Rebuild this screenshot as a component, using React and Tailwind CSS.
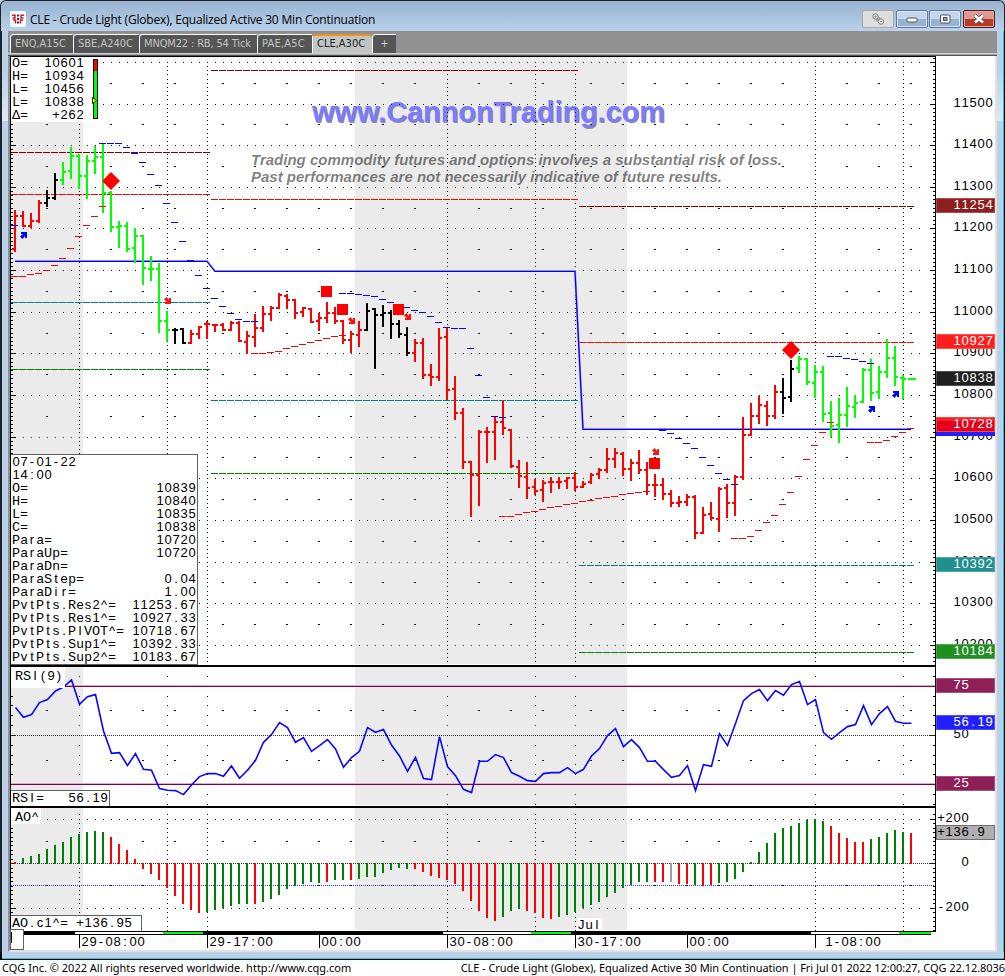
const FONT = "Liberation Sans, Arial, sans-serif";
const CAPS_FONT = "Liberation Mono, monospace";
const barX = (i) => 15 + i * 8;

// [high, low, open, close] in chart pixels, one row per 30 minute bar
const BARS = [
  [210, 252, 249, 216], [211, 227, 216, 226], [213, 228, 226, 221], [200, 223, 221, 203],
  [190, 207, 203, 198], [173, 200, 198, 180], [162, 185, 180, 172], [147, 179, 171, 156],
  [154, 189, 156, 176], [155, 199, 176, 161], [146, 174, 161, 157], [143, 213, 157, 193],
  [191, 232, 193, 227], [221, 248, 227, 226], [222, 252, 226, 249], [228, 263, 248, 236],
  [235, 285, 236, 268], [256, 281, 269, 269], [263, 333, 269, 321], [311, 341, 321, 330],
  [328, 344, 330, 330], [328, 344, 329, 343], [330, 344, 343, 334], [326, 339, 334, 327],
  [321, 339, 324, 324], [324, 332, 325, 325], [323, 331, 325, 330], [321, 331, 330, 323],
  [321, 342, 323, 341], [331, 354, 342, 336], [314, 347, 337, 328], [306, 332, 328, 314],
  [306, 321, 314, 308], [293, 309, 308, 295], [294, 309, 296, 300], [299, 319, 300, 313],
  [307, 317, 312, 308], [308, 323, 309, 322], [313, 331, 321, 318], [302, 323, 318, 313],
  [307, 324, 313, 321], [320, 344, 321, 340], [331, 353, 340, 334], [321, 347, 335, 330],
  [303, 331, 330, 311], [308, 369, 309, 315], [305, 327, 315, 313], [310, 339, 313, 324],
  [320, 338, 324, 334], [327, 356, 335, 353], [339, 362, 353, 343], [338, 379, 343, 375],
  [364, 386, 375, 377], [328, 381, 377, 338], [327, 400, 337, 390], [376, 420, 389, 413],
  [408, 469, 413, 462], [461, 517, 462, 475], [430, 506, 475, 432], [427, 463, 432, 432],
  [417, 460, 432, 422], [401, 435, 422, 428], [429, 468, 430, 466], [460, 488, 467, 476],
  [462, 499, 477, 488], [479, 495, 487, 491], [480, 502, 490, 483], [477, 493, 482, 482],
  [477, 489, 482, 482], [477, 489, 481, 478], [472, 491, 478, 487], [481, 488, 487, 484],
  [473, 484, 482, 475], [468, 479, 474, 470], [448, 473, 470, 459], [448, 468, 459, 453],
  [452, 476, 454, 469], [459, 481, 469, 463], [450, 474, 463, 470], [462, 495, 470, 485],
  [474, 497, 485, 485], [478, 500, 485, 494], [490, 507, 494, 503], [496, 507, 503, 502],
  [494, 506, 502, 497], [495, 539, 497, 533], [507, 534, 533, 515], [502, 520, 514, 518],
  [487, 532, 519, 489], [484, 518, 488, 503], [475, 516, 503, 477], [417, 480, 477, 435],
  [403, 436, 435, 416], [396, 424, 416, 405], [401, 426, 406, 416], [385, 419, 416, 392],
  [378, 414, 392, 398], [360, 402, 397, 369], [356, 373, 368, 359], [358, 385, 359, 382],
  [365, 398, 383, 372], [366, 422, 372, 414], [401, 437, 413, 426], [398, 443, 425, 415],
  [387, 427, 415, 406], [395, 418, 407, 403], [368, 403, 402, 370], [359, 401, 370, 393],
  [366, 399, 392, 372], [339, 378, 372, 358], [346, 386, 358, 377], [375, 399, 378, 379],
  [378, 380, 379, 379],
];

const barColor = (i) => {
  if ((i >= 6 && i <= 19) || i >= 98) return "#00ff00";
  if (i === 4 || i === 5 || i === 20 || i === 21 || (i >= 44 && i <= 49) || i === 96 || i === 97) return "#000";
  return "#ff0000";
};

// parabolic runs: colour, first bar, one level per bar
const PARA = [
  ["#0000ff", 0, [225]],
  ["#0000ff", 11, [143, 143, 143, 147, 153, 162, 174, 185, 203, 222, 241, 260, 275, 288, 298, 306, 313, 319, 321, 321]],
  ["#0000ff", 41, [293, 293, 294, 295, 296, 299, 302, 305, 307, 310, 312, 316, 322, 327, 328, 328, 348, 375, 397, 416, 417]],
  ["#0000ff", 81, [430, 433, 438, 443, 448, 457, 465, 473, 479, 484]],
  ["#0000ff", 102, [356, 356, 358, 359, 361, 363]],
  ["#ff0000", 0, [276, 276, 274, 273, 270, 265, 258, 248, 236, 225, 216, 206]],
  ["#ff0000", 30, [353, 353, 352, 351, 348, 346, 344, 342, 340, 338, 336, 335]],
  ["#ff0000", 61, [516, 516, 514, 512, 511, 509, 507, 506, 504, 503, 501, 500, 498, 497, 496, 494, 493, 492, 491]],
  ["#ff0000", 90, [538, 538, 536, 530, 522, 515, 504, 492, 476, 459, 445, 432, 422]],
  ["#ff0000", 107, [442, 442, 440, 436, 432, 428]],
];

// pivot levels: from, to, y, colour
const PIVOTS = [
  [11, 210, 152, "#800000"], [11, 210, 194, "#ff0000"], [11, 210, 302, "#008080"], [11, 210, 369, "#008000"],
  [211, 578, 70, "#800000"], [211, 578, 199, "#ff0000"], [211, 578, 400, "#008080"], [211, 578, 473, "#008000"],
  [579, 914, 206, "#800000"], [579, 914, 342, "#ff0000"], [579, 914, 565, "#008080"], [579, 914, 652, "#008000"],
];

const RSI = [
  707.3, 717, 714.3, 702.3, 699.3, 690.7, 686.7, 679.7, 704, 696.3, 694.3, 730.7, 753, 752.3, 765.3, 753.3,
  769, 770, 788.3, 790, 790.3, 794.3, 784.7, 776.3, 773.3, 773.3, 776, 765.7, 778, 770, 760, 742, 734.3, 722.3,
  727.3, 742, 737.3, 751, 745.3, 739.3, 748.7, 767, 757.3, 751, 727.3, 732, 729.3, 744.7, 755.7, 771, 757,
  778.3, 779.3, 736.3, 766.3, 775.3, 789, 792.3, 761, 761, 754.3, 757.3, 772.3, 776, 780.3, 781, 773.3, 772.3,
  772.3, 767.3, 773.3, 769, 755.7, 748.3, 735.3, 728.3, 746.3, 739.3, 747.3, 761, 761, 769.3, 777, 775.3,
  765.3, 790.3, 764.3, 766, 733.3, 745.3, 723.3, 700.3, 693.3, 689.3, 700.3, 690.3, 695, 684.3, 681.3, 704.3,
  699.3, 732.3, 739, 732.3, 726.3, 724.3, 705.3, 724.3, 713.3, 706.3, 721, 723, 723,
];

const AO = [
  862, 858, 856, 854, 849, 845, 842, 837, 834, 832, 831, 832, 837, 844, 850, 859, 869, 874, 880, 888, 896, 904,
  910, 913, 912, 910, 908, 906, 904, 904, 904, 902, 899, 895, 889, 886, 884, 882, 883, 882, 880, 880, 880, 879,
  877, 877, 873, 870, 868, 869, 869, 872, 876, 878, 880, 884, 891, 901, 911, 918, 921, 917, 911, 909, 911, 913,
  918, 919, 917, 915, 912, 908, 905, 902, 897, 893, 888, 885, 882, 882, 882, 882, 882, 884, 884, 885, 886, 885,
  883, 882, 879, 872, 862, 852, 843, 833, 828, 826, 823, 820, 819, 821, 826, 833, 838, 842, 842, 839, 837, 833,
  830, 832, 833,
];
const AO_RED = [
  [0, 0], [12, 23], [30, 30], [39, 39], [42, 42], [50, 60], [64, 67], [80, 81], [83, 84], [86, 87], [102, 106], [112, 112],
];
const aoColor = (i) => {
  if (i === 82) return "#a0a0a0";
  return AO_RED.some(([a, b]) => i >= a && i <= b) ? "#ff0000" : "#008000";
};

const SESSIONS = [79, 167, 207, 447, 535, 575, 815, 903];
const MARKS = [
  47, 111, 143, 175, 223, 255, 287, 319, 351, 383, 415, 479, 511, 543, 591, 623, 655, 687, 719, 751, 783, 847, 879, 911,
];
const range = (n) => Array.from({ length: n }, (_, i) => i);
const priceY = (p) => Math.floor(62.45 + (11600 - p) * 0.4163);

// fixed pitch text, every character centred in an 8px cell;
// wide capitals come from the mono face so they stay inside their cell
function Cells({ x, y, fill = "#000", children }) {
  const chars = [...children];
  return (
    <text
      x={chars.map((_, i) => x + 4 + i * 8).join(" ")}
      y={y}
      fill={fill}
      fontSize="13"
      fontFamily={FONT}
      textAnchor="middle"
      style={{ whiteSpace: "pre" }}
    >
      {children.split(/([A-HJ-Z]+)/).filter(Boolean).map((run, i) =>
        /^[A-HJ-Z]/.test(run) ? <tspan key={i} fontFamily={CAPS_FONT} fontSize="13.5">{run}</tspan> : run
      )}
    </text>
  );
}

function Badge({ y, color, border, text, x = 953, fill = "#fff" }) {
  return (
    <g>
      <rect x="936.5" y={y + 0.5} width="58" height="14" fill={color} stroke={border} />
      {text && <Cells x={x} y={y + 11} fill={fill}>{text}</Cells>}
    </g>
  );
}

function Shade({ y, height }) {
  return (
    <g fill="#ebebeb">
      <rect x="11" y={y} width="72" height={height} />
      <rect x="355" y={y} width="272" height={height} />
    </g>
  );
}

function DotRow({ y }) {
  return <path d={`M15 ${y + 0.5}H927`} stroke="#000" strokeDasharray="1 7" />;
}

function MarkRow({ y }) {
  return <path d={MARKS.map((x) => `M${x - 1} ${y + 0.5}h2`).join("")} stroke="#000" />;
}

function Columns({ rows, from = 0 }) {
  return (
    <path
      d={SESSIONS.flatMap((x) => rows.filter((y) => y >= from).map((y) => `M${x} ${y + 0.5}h1`)).join("")}
      stroke="#000"
    />
  );
}

function Ticks({ rows, majors }) {
  return (
    <path
      d={
        rows.map((y) => `M11 ${y + 0.5}h2M933 ${y + 0.5}h2`).join("") +
        majors.map((y) => `M11 ${y + 0.5}h5M930 ${y + 0.5}h5`).join("")
      }
      stroke="#000"
    />
  );
}

function Frame({ y, height }) {
  return <path d={`M10.5 ${y}v${height}M935.5 ${y}v${height}`} stroke="#000" />;
}

function Arrow({ x, y, up }) {
  return (
    <path
      d={up ? "M1 0H7V6H5V4L2.5 7L0 4.5L3 2H1Z" : "M7 1V7H1V5H3L0 2.5L2.5 0L5 3V1Z"}
      transform={`translate(${x} ${y})`}
      fill={up ? "#0000ff" : "#ff1010"}
    />
  );
}

const HEADER_ROWS = ["O=  10601", "H=  10934", "L=  10456", "L=  10838", "Δ=   +262"];
const INFO_ROWS = [
  ["07-01-22", ""], ["14:00", ""], ["O=", "10839"], ["H=", "10840"], ["L=", "10835"], ["C=", "10838"],
  ["Para=", "10720"], ["ParaUp=", "10720"], ["ParaDn=", ""], ["ParaStep=", "0.04"], ["ParaDir=", "1.00"],
  ["PvtPts.Res2^=", "11253.67"], ["PvtPts.Res1^=", "10927.33"], ["PvtPts.PIVOT^=", "10718.67"],
  ["PvtPts.Sup1^=", "10392.33"], ["PvtPts.Sup2^=", "10183.67"],
];

function PricePane() {
  const rows = range(146).map((i) => priceY(11610 - i * 10));
  const majors = range(15).map((i) => priceY(11600 - i * 100));
  const pivot = "15,Y1 207,Y1 215,Y2 575,Y2 583,Y3 911,Y3";
  const pivotAt = (d) => pivot.replaceAll("Y1", 261.5 + d).replaceAll("Y2", 271.5 + d).replaceAll("Y3", 429.5 + d);
  return (
    <svg viewBox="10 56 985 609" className="block h-[609px] w-[985px] shrink-0">
      <Shade y={56} height={608} />
      <g fontFamily={FONT} fontWeight="bold">
        <text x="313" y="123" fontSize="29" textLength="353" fill="#909090">www.CannonTrading.com</text>
        <text x="312" y="122" fontSize="29" textLength="353" fill="#7b7bff">www.CannonTrading.com</text>
        <g fontSize="15" fontStyle="italic" fill="#000" fillOpacity="0.5">
          <text x="251" y="165" textLength="531">Trading commodity futures and options involves a substantial risk of loss.</text>
          <text x="251" y="182" textLength="471">Past performances are not necessarily indicative of future results.</text>
        </g>
      </g>
      <g shapeRendering="crispEdges">
        {majors.map((y) => <DotRow key={y} y={y} />)}
        {range(14).map((i) => <MarkRow key={i} y={priceY(11550 - i * 100)} />)}
        <Columns rows={rows} from={62} />
        <Ticks rows={rows} majors={majors} />
        {PIVOTS.map(([a, b, y, color]) => (
          <path key={`${a}-${y}`} d={`M${a} ${y + 0.5}H${b}`} stroke={color} strokeDasharray="7 1" />
        ))}
      </g>
      <polyline points={pivotAt(-0.5)} fill="none" stroke="#8c8cff" strokeWidth="2" />
      <polyline points={pivotAt(0)} fill="none" stroke="#0000ee" strokeWidth="1.2" />
      <g shapeRendering="crispEdges">
        {BARS.map(([h, l, o, c], i) => (
          <path
            key={i}
            d={`M${barX(i)} ${h}V${l}M${barX(i) - 3} ${o}h3M${barX(i)} ${c}h${i === 112 ? 5 : 3}`}
            stroke={barColor(i)}
            strokeWidth="2"
          />
        ))}
        {PARA.map(([color, start, levels]) => (
          <path
            key={color + start}
            d={levels.map((y, i) => `M${barX(start + i) - 4} ${y + 0.5}h7`).join("")}
            stroke={color}
          />
        ))}
      </g>
      <g fill="#ff0000">
        <path d="M111 172l9 9l-9 9l-9-9z" />
        <path d="M791 341l9 9l-9 9l-9-9z" />
        <rect x="321" y="286" width="11" height="11" />
        <rect x="337" y="304" width="11" height="11" />
        <rect x="393" y="304" width="11" height="11" />
        <rect x="649" y="458" width="11" height="11" />
      </g>
      <Arrow x={164} y={297} />
      <Arrow x={348} y={317} />
      <Arrow x={404} y={313} />
      <Arrow x={652} y={448} />
      <Arrow x={20} y={232} up />
      <Arrow x={868} y={406} up />
      <Arrow x={892} y={391} up />

      <rect x="11" y="57" width="91" height="65" fill="#fff" />
      {HEADER_ROWS.map((row, i) => <Cells key={i} x={12} y={67 + i * 13}>{row}</Cells>)}
      <rect x="93.5" y="59.5" width="4" height="59" fill="#00ff00" stroke="#000" />
      <rect x="94" y="60" width="3" height="11" fill="#ff0000" />
      <path d="M92.5 97.5L96.5 100.5L92.5 103.5Z" fill="#ffff00" stroke="#000" strokeWidth="0.8" />

      <rect x="10.5" y="454.5" width="187" height="210" fill="#fff" stroke="#606060" />
      {INFO_ROWS.map(([label, value], i) => (
        <Cells key={label} x={12} y={466 + i * 13}>{value ? label + value.padStart(23 - label.length) : label}</Cells>
      ))}
      <Frame y={56} height={609} />
      <path d="M10 56.5H936" stroke="#000" />

      {range(14).map((i) => 11500 - i * 100).map((p) => (
        <Cells key={p} x={953} y={priceY(p) + 3}>{String(p)}</Cells>
      ))}
      <Badge y={198} color="#8f1f1f" border="#a85050" text="11254" />
      <Badge y={334} color="#ff1f1f" border="#ff5050" text="10927" />
      <Badge y={371} color="#202020" border="#505050" text="10838" />
      <rect x="936" y="421" width="59" height="15" fill="#1f1fff" />
      <Badge y={417} color="#ff1f1f" border="#ff4040" />
      <rect x="937" y="421" width="57" height="10" fill="#e3001f" />
      <Cells x={953} y={428} fill="#fff">10728</Cells>
      <Badge y={557} color="#1f8f8f" border="#50a8a8" text="10392" />
      <Badge y={644} color="#1f8f1f" border="#50a850" text="10184" />
    </svg>
  );
}

function RsiPane() {
  const rows = range(14).map((i) => Math.floor(676.4 + i * 9.83));
  return (
    <svg viewBox="10 665 985 141" className="block h-[141px] w-[985px] shrink-0">
      <Shade y={667} height={138} />
      <g shapeRendering="crispEdges">
        <Columns rows={rows} />
        <Ticks rows={rows} majors={[735]} />
        <MarkRow y={710} />
        <MarkRow y={760} />
        <path d="M11 735.5H935" stroke="#303030" strokeDasharray="1 1" />
        <path d="M11 685.5H935M11 783.5H935" stroke="#d9b0c8" />
        <path d="M11 686.5H935M11 784.5H935" stroke="#800048" />
      </g>
      <polyline
        points={RSI.map((y, i) => `${barX(i) + 0.5},${y + 0.3}`).join(" ")}
        fill="none"
        stroke="#0808ff"
        strokeWidth="1.6"
      />
      <rect x="11" y="667" width="54" height="21" fill="#fff" />
      <Cells x={15} y={680}>RSI(9)</Cells>
      <rect x="10.5" y="790.5" width="99" height="16" fill="#fff" stroke="#606060" />
      <Cells x={12} y={802}>RSI=   56.19</Cells>
      <Frame y={665} height={141} />
      <path d="M10 666H936" stroke="#000" strokeWidth="2" />
      <Cells x={953} y={738}>50</Cells>
      <Badge y={678} color="#8f1f57" border="#a85080" text="75" />
      <Badge y={715} color="#1f1fff" border="#5050ff" text="56.19" />
      <Badge y={776} color="#8f1f57" border="#a85080" text="25" />
    </svg>
  );
}

function AoPane() {
  const rows = range(27).map((i) => Math.floor(814.8 + i * 4.45));
  return (
    <svg viewBox="10 806 985 125" className="block h-[125px] w-[985px] shrink-0">
      <Shade y={808} height={122} />
      <g shapeRendering="crispEdges">
        <Columns rows={rows} />
        <Ticks rows={rows} majors={[819, 863, 908]} />
        <DotRow y={819} />
        <DotRow y={908} />
        <MarkRow y={841} />
        <path d="M11 863.5H935" stroke="#303030" strokeDasharray="1 1" />
        <path d="M11 885.5H935" stroke="#3838ff" strokeDasharray="1 1" />
        <MarkRow y={885} />
        {AO.map((y, i) => (
          <path key={i} d={`M${barX(i)} ${y < 863 ? 864 : 863}V${y}`} stroke={aoColor(i)} strokeWidth="2" />
        ))}
      </g>
      <rect x="11" y="808" width="30" height="16" fill="#fff" />
      <Cells x={15} y={821}>AO^</Cells>
      <rect x="10.5" y="915.5" width="131" height="17" fill="#fff" stroke="#606060" />
      <Cells x={12} y={927}>AO.c1^= +136.95</Cells>
      <rect x="577" y="918" width="25" height="12" fill="#fff" />
      <Cells x={577} y={929}>Jul</Cells>
      <Frame y={806} height={125} />
      <path d="M10 807H936" stroke="#000" strokeWidth="2" />
      <Cells x={937} y={822}>+200</Cells>
      <Badge y={825} x={937} color="#b0aeb0" border="#707070" text="+136.9" fill="#000" />
      <Cells x={961} y={866}>0</Cells>
      <Cells x={937} y={911}>-200</Cells>
    </svg>
  );
}

const TIMES = [
  [79, "29-08:00"], [207, "29-17:00"], [319, "00:00"], [447, "30-08:00"], [575, "30-17:00"], [687, "00:00"], [815, " 1-08:00"],
];

function TimeAxis() {
  return (
    <svg viewBox="10 931 985 19" className="block h-[19px] w-[985px] shrink-0 overflow-visible">
      <rect x="10" y="931" width="921" height="4" fill="#000" />
      <path d="M931 931.5H936" stroke="#000" />
      <path d="M75 933H163M443 933H531M811 933H899" stroke="#fff" strokeWidth="2" />
      <path d="M163 933H203M531 933H571M899 933H931" stroke="#00ff00" strokeWidth="2" />
      {TIMES.map(([x, label]) => (
        <g key={x}>
          <path d={`M${x + 0.5} 935v13`} stroke="#000" />
          <Cells x={x + 2} y={946}>{label}</Cells>
        </g>
      ))}
      <rect x="10.5" y="929.5" width="13" height="20" fill="#fff" stroke="#606060" />
      <path d="M11.5 932v11" stroke="#000" />
    </svg>
  );
}

const TABS = [
  ["ENQ,A15C", "w-[63px]"], ["SBE,A240C", "w-[66px]"], ["MNQM22 : RB, 54 Tick", "w-[118px] tracking-[-0.15px]"],
  ["PAE,A5C", "w-[55px] tracking-[0.2px]"], ["CLE,A30C", "w-[60px]"],
];

function Tabs() {
  return (
    <div className="flex h-[22px] shrink-0 items-end bg-[#919191] pl-[2px] font-['DejaVu_Sans_Condensed','Noto_Sans',sans-serif] text-[11px]">
      {TABS.map(([label, width], i) => (
        <div
          key={label}
          className={
            i === 4
              ? `${width} h-[19px] rounded-t-sm border-t-2 border-l border-t-[#f0921e] border-l-white bg-[#c0c5c5] pl-1 leading-[15px] whitespace-nowrap text-[#202020]`
              : `${width} h-[19px] rounded-tl-sm border-t border-l border-white bg-[#555555] pl-1 leading-[17px] whitespace-nowrap text-[#c4c4c4]`
          }
        >
          {label}
        </div>
      ))}
      <div className="h-[19px] w-6 rounded-tl-sm border-t border-l border-white bg-[#555555] text-center leading-[17px] text-[#d0d0d0]">+</div>
    </div>
  );
}

function WindowButton({ className, children }) {
  return (
    <div className={`flex h-[18px] w-8 items-center justify-center rounded-[2px] border ${className}`}>
      <svg viewBox="0 0 14 12" className="h-3 w-[14px]">{children}</svg>
    </div>
  );
}

function TitleBar() {
  const blue = "border-[#5d7a9c] bg-linear-to-b from-[#c3d6eb] from-50% to-[#97b3d2] to-50% shadow-[inset_0_0_0_1px_#d5e3f2]";
  return (
    <div className="flex h-[31px] shrink-0 rounded-t-md border-t border-r border-l border-[#202428] bg-linear-to-b from-[#98b3d1] to-[#b9d1ea] pr-[9px] pl-[9px]">
      <svg viewBox="0 0 16 16" className="mt-[10px] h-4 w-4">
        <rect width="16" height="16" rx="2" fill="#fff" stroke="#dde6ee" strokeWidth="0.5" />
        <g fill="none" stroke="#c4203a" strokeWidth="1.5">
          <path d="M2 4.300H5V7H2.500M14 4.300H11V7H13.500" />
          <path d="M3 9H5.500V12.500M13 9H10.500V12.500" />
        </g>
        <g fill="#6a1830">
          <rect x="7" y="3.500" width="2" height="2" />
          <rect x="7" y="7" width="2" height="2" />
          <rect x="7" y="10.500" width="2" height="2" />
        </g>
      </svg>
      <span className="mt-[10px] ml-[4px] w-[346px] text-[12px] leading-[17px] tracking-[-0.2px] whitespace-nowrap text-black font-['Open_Sans','Noto_Sans',sans-serif]">
        CLE - Crude Light (Globex), Equalized Active 30 Min Continuation
      </span>
      <div className="mt-[9px] ml-auto flex gap-[1.6px]">
        <WindowButton className="border-[#a9a9a9] bg-[#dddddd]">
          <path d="M2.500 5.500L5.500 1.500L13 8L10 11.500Z" fill="#a0a0a0" />
          <g fill="#ececec" stroke="#808080">
            <circle cx="4.500" cy="3.500" r="2.700" />
            <circle cx="10" cy="8.500" r="2.700" />
            <path d="M3.500 3.500h2M4.500 2.500v2M9 8.500h2" />
          </g>
        </WindowButton>
        <WindowButton className={blue}>
          <rect x="2" y="5" width="10" height="4" rx="1" fill="#fff" stroke="#4a5568" />
        </WindowButton>
        <WindowButton className={blue}>
          <rect x="2.500" y="2" width="9.500" height="8" rx="1" fill="#fff" stroke="#4a5568" />
          <rect x="5.500" y="4.500" width="3.500" height="3" fill="#8ba6c8" stroke="#4a5568" />
        </WindowButton>
        <WindowButton className="border-[#5a1a1a] bg-linear-to-b from-[#dd9a90] from-50% to-[#b83a28] to-50% shadow-[inset_0_0_0_1px_#e8a49a]">
          <path d="M3 2.500L11 9.500M11 2.500L3 9.500" stroke="#4a4a58" strokeWidth="4.200" />
          <path d="M3 2.500L11 9.500M11 2.500L3 9.500" stroke="#fff" strokeWidth="2.600" />
        </WindowButton>
      </div>
    </div>
  );
}

export default function App() {
  return (
    <div className="flex h-[976px] w-[1005px] flex-col overflow-hidden bg-white">
      <div className="flex h-[960px] shrink-0 flex-col bg-[#b9d1ea]">
        <TitleBar />
        <div className="flex h-[921px] shrink-0">
          <div className="w-2 shrink-0 border-l-2 border-[#202428] bg-linear-to-b from-[#b9d1ea] from-[40px] via-[#dce9f6] via-[90px] to-[#b9d1ea] to-[90px]" />
          <div className="flex w-[989px] shrink-0 flex-col">
            <Tabs />
            <div className="h-[3px] shrink-0 border-t border-b border-t-[#d0d0d0] border-b-[#505050] bg-[#a8a8a8]" />
            <div className="flex h-[896px] flex-col border-r-2 border-b-2 border-l-2 border-r-[#e4e0dc] border-b-[#e4e0dc] border-l-[#909090] bg-white">
              <PricePane />
              <RsiPane />
              <AoPane />
              <TimeAxis />
            </div>
          </div>
          <div className="w-2 shrink-0 border-r border-black bg-linear-to-b from-[#b9d1ea] from-[40px] via-[#dce9f6] via-[90px] to-[#b9d1ea] to-[90px] shadow-[inset_-1px_0_0_#20c8dc]" />
        </div>
        <div className="flex-1 border-b border-l-2 border-r border-black shadow-[inset_0_-1px_0_#20c8dc]" />
      </div>
      <div className="flex h-4 items-center justify-between pl-[2px] text-[11px] leading-4 whitespace-nowrap text-black font-['Noto_Sans',sans-serif]">
        <span>CQG Inc. © 2022 All rights reserved worldwide. http://www.cqg.com</span>
        <span className="tracking-[-0.05px]">
          CLE - Crude Light (Globex), Equalized Active 30 Min Continuation | Fri Jul 01 2022 12:00:27, CQG 22.12.8036
        </span>
      </div>
    </div>
  );
}
